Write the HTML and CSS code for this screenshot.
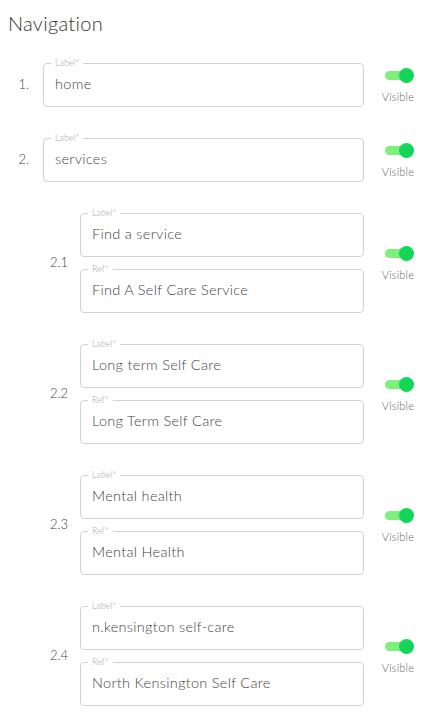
FILE: index.html
```html
<!DOCTYPE html>
<html>
<head>
<meta charset="utf-8">
<link rel="stylesheet" href="styles.css">
</head>
<body>
<h2 class="title">Navigation</h2>
<div class="nav-list">
  <div class="row">
    <div class="num">1.</div>
    <div class="fields">
      <div class="field"><span class="legend">Label*</span><span class="value">home</span></div>
    </div>
    <div class="vis"><span class="switch"><span class="track"></span><span class="thumb"></span></span><span class="vis-label">Visible</span></div>
  </div>
  <div class="row">
    <div class="num">2.</div>
    <div class="fields">
      <div class="field"><span class="legend">Label*</span><span class="value">services</span></div>
    </div>
    <div class="vis"><span class="switch"><span class="track"></span><span class="thumb"></span></span><span class="vis-label">Visible</span></div>
  </div>
  <div class="row sub">
    <div class="num">2.1</div>
    <div class="fields">
      <div class="field"><span class="legend">Label*</span><span class="value">Find a service</span></div>
      <div class="field"><span class="legend">Ref*</span><span class="value">Find A Self Care Service</span></div>
    </div>
    <div class="vis"><span class="switch"><span class="track"></span><span class="thumb"></span></span><span class="vis-label">Visible</span></div>
  </div>
  <div class="row sub">
    <div class="num">2.2</div>
    <div class="fields">
      <div class="field"><span class="legend">Label*</span><span class="value">Long term Self Care</span></div>
      <div class="field"><span class="legend">Ref*</span><span class="value">Long Term Self Care</span></div>
    </div>
    <div class="vis"><span class="switch"><span class="track"></span><span class="thumb"></span></span><span class="vis-label">Visible</span></div>
  </div>
  <div class="row sub">
    <div class="num">2.3</div>
    <div class="fields">
      <div class="field"><span class="legend">Label*</span><span class="value">Mental health</span></div>
      <div class="field"><span class="legend">Ref*</span><span class="value">Mental Health</span></div>
    </div>
    <div class="vis"><span class="switch"><span class="track"></span><span class="thumb"></span></span><span class="vis-label">Visible</span></div>
  </div>
  <div class="row sub">
    <div class="num">2.4</div>
    <div class="fields">
      <div class="field"><span class="legend">Label*</span><span class="value">n.kensington self-care</span></div>
      <div class="field"><span class="legend">Ref*</span><span class="value">North Kensington Self Care</span></div>
    </div>
    <div class="vis"><span class="switch"><span class="track"></span><span class="thumb"></span></span><span class="vis-label">Visible</span></div>
  </div>
</div>
</body>
</html>
```
FILE: styles.css
```css
* { box-sizing: border-box; }
html, body { background: #fff; }
body {
  margin: 0;
  padding: 0 14px 0 8px;
  font-family: "Lato", "Noto Sans", sans-serif;
  font-weight: 300;
  color: #444;
}
.title {
  margin: 0;
  padding-top: 10px;
  height: 63px;
  font-size: 20px;
  line-height: 26px;
  font-weight: 300;
  color: #333;
  letter-spacing: 0.3px;
}
.nav-list {
  display: flex;
  flex-direction: column;
  gap: 31px;
}
.row {
  display: flex;
  align-items: center;
}
.num {
  width: 21px;
  margin-right: 14px;
  text-align: right;
  font-size: 13px;
  color: #444;
  flex: none;
  margin-top: -3px;
}
.row.sub .num {
  width: 60px;
  margin-right: 12px;
}
.fields {
  flex: 1;
  display: flex;
  flex-direction: column;
  gap: 12px;
}
.field {
  position: relative;
  height: 44px;
  border: 1px solid #d2d2d2;
  border-radius: 4px;
  display: flex;
  align-items: center;
  padding: 0 11px 3px;
}
.legend {
  position: absolute;
  top: -6px;
  left: 7px;
  padding: 0 4px;
  background: #fff;
  font-size: 9px;
  line-height: 10px;
  color: #aaa;
}
.value {
  font-size: 14.5px;
  letter-spacing: 0.3px;
  color: #444;
}
.vis {
  flex: none;
  width: 52px;
  margin-left: 8px;
  display: flex;
  flex-direction: column;
  align-items: center;
  gap: 7px;
}
.switch {
  position: relative;
  width: 29px;
  height: 15px;
  margin-left: 2px;
}
.track {
  position: absolute;
  left: 0;
  top: 3px;
  width: 26px;
  height: 9px;
  border-radius: 5px;
  background: #7ef07c;
}
.thumb {
  position: absolute;
  right: 0;
  top: 0;
  width: 15px;
  height: 15px;
  border-radius: 50%;
  background: #13d659;
}
.vis-label {
  font-size: 11px;
  color: #666;
  letter-spacing: 0.2px;
}
```
